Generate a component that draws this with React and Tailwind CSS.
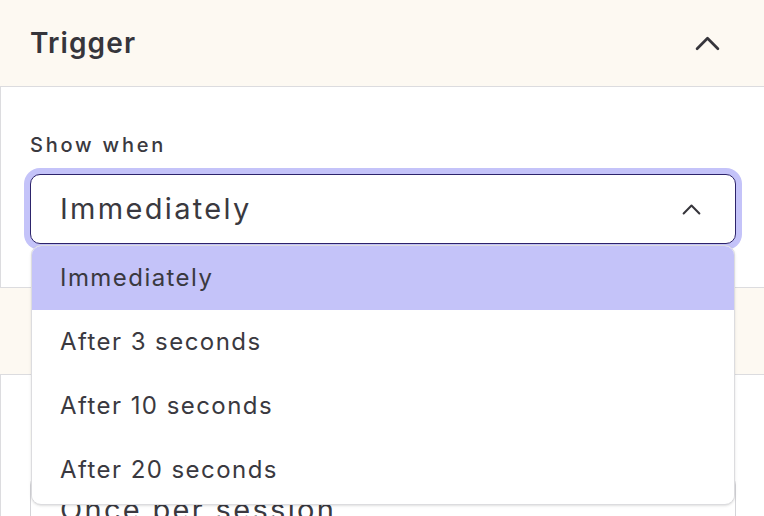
import React from "react";

const Chevron = ({ className }) => (
  <svg viewBox="0 0 24 14" fill="none" className={className}>
    <path d="M2 12 L12 2 L22 12" stroke="currentColor" strokeWidth="2.6" strokeLinecap="round" strokeLinejoin="round" />
  </svg>
);

const options = ["Immediately", "After 3 seconds", "After 10 seconds", "After 20 seconds"];

const SectionHeader = ({ title }) => (
  <div className="h-[87px] bg-[#fdf9f2] border-b border-[#dcdcdf] flex items-center justify-between pl-[30px] pr-[44px]">
    <h2 className="text-[28px] font-semibold tracking-[0.04em] text-[#36353b]">{title}</h2>
    <Chevron className="w-[25px] h-[15px] text-[#36353b]" />
  </div>
);

export default function App() {
  return (
    <div
      className="w-[764px] h-[516px] overflow-hidden bg-white text-[#3a3940]"
      style={{ fontFamily: "Inter, 'Noto Sans', sans-serif" }}
    >
      <SectionHeader title="Trigger" />
      <div className="h-[201px] border-l border-b border-[#dcdcdf] pl-[29px] pr-[28px] pt-[45px]">
        <label className="block text-[20px] font-medium tracking-[0.14em] text-[#3a3940] leading-[26px]">
          Show when
        </label>
        <div className="relative mt-[16px]">
          <div className="h-[70px] rounded-[10px] border border-[#2d246b] ring-[6px] ring-[#c4c3f9] bg-white flex items-center justify-between pl-[29px] pr-[34px]">
            <span className="text-[29px] tracking-[0.08em]">Immediately</span>
            <Chevron className="w-[19px] h-[11px] text-[#36353b]" />
          </div>
          <ul className="absolute z-10 left-px right-px top-[71px] bg-white border border-[#dcdcdf] rounded-[10px] shadow-sm overflow-hidden pb-[2px]">
            {options.map((opt, i) => (
              <li
                key={opt}
                className={
                  "h-[64px] flex items-center pl-[28px] text-[24px] tracking-[0.06em] " +
                  (i === 0 ? "bg-[#c4c3f9]" : "bg-white")
                }
              >
                {opt}
              </li>
            ))}
          </ul>
        </div>
      </div>
      <SectionHeader title="Display" />
      <div className="h-[300px] border-l border-[#dcdcdf] pl-[29px] pr-[28px] pt-[50px]">
        <label className="block text-[20px] font-medium tracking-[0.14em] leading-[26px]">Frequency</label>
        <div className="mt-[24px] h-[70px] rounded-[10px] border border-[#d4d4d8] flex items-center pl-[29px]">
          <span className="text-[29px] tracking-[0.08em]">Once per session</span>
        </div>
      </div>
    </div>
  );
}
